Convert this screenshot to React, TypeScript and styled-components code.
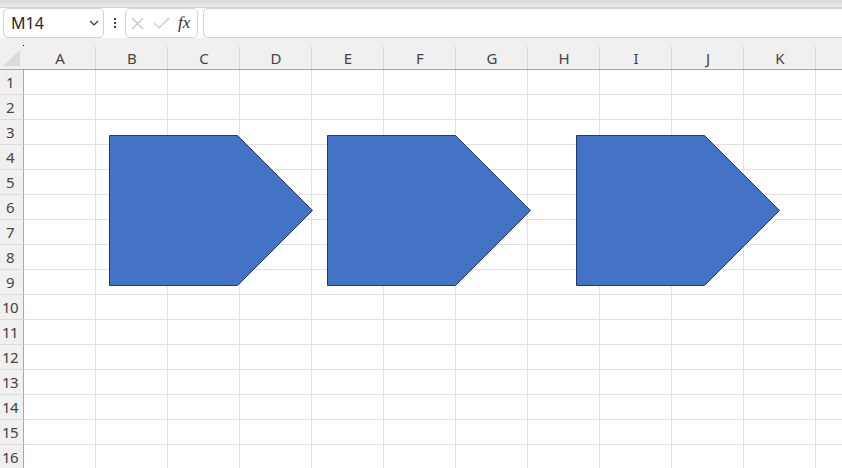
import styled, { createGlobalStyle } from "styled-components"

const GlobalStyle = createGlobalStyle`
	html, body {
		margin: 0;
		padding: 0;
		background: #fff;
		overflow: hidden;
	}
	body {
		font-family: "Noto Sans", "Liberation Sans", sans-serif;
	}
`

const Page = styled.div`
	position: relative;
	width: 842px;
	height: 468px;
	overflow: hidden;
	background: #fff;
`

const TopStrip = styled.div`
	height: 7px;
	background: linear-gradient(#d9d9d9, #ebebeb);
	border-bottom: 1px solid #d4d4d4;
`

const FormulaBar = styled.div`
	display: flex;
	align-items: stretch;
	height: 30px;
	padding-left: 3px;
	box-sizing: border-box;
`

const NameBox = styled.div`
	width: 101px;
	box-sizing: border-box;
	display: flex;
	align-items: center;
	justify-content: space-between;
	padding: 0 4px 0 7px;
	border: 1px solid #d2d2d2;
	border-radius: 5px;
	font-size: 16px;
	color: #262626;
`

const Dots = styled.div`
	width: 21px;
	display: flex;
	flex-direction: column;
	align-items: center;
	justify-content: center;
	gap: 2px;

	span {
		width: 2px;
		height: 2px;
		background: #3a3a3a;
	}
`

const FxBox = styled.div`
	width: 73px;
	box-sizing: border-box;
	display: flex;
	align-items: center;
	padding-left: 5px;
	gap: 9px;
	border: 1px solid #d2d2d2;
	border-radius: 5px;
`

const Fx = styled.span`
	font-family: "Liberation Serif", "DejaVu Serif", serif;
	font-style: italic;
	font-size: 17px;
	color: #333;
	margin-left: -1px;
`

const FormulaInput = styled.div`
	flex: 1;
	margin-left: 5px;
	border: 1px solid #d2d2d2;
	border-right: none;
	border-radius: 5px 0 0 5px;
`

const Sheet = styled.div`
	display: grid;
	grid-template-columns: 24px repeat(12, 72px);
	grid-template-rows: 32px;
	grid-auto-rows: 25px;
	font-size: 15px;
	color: #444;
`

const Corner = styled.div`
	position: relative;
	background: #f0f0f0;
	border-bottom: 1px solid #a8a8a8;

	&::before {
		content: "";
		position: absolute;
		left: 3px;
		bottom: 3px;
		width: 0;
		height: 0;
		border-left: 17px solid transparent;
		border-bottom: 16px solid #dadada;
	}

	&::after {
		content: "";
		position: absolute;
		right: 0;
		top: 7px;
		width: 1px;
		height: 1px;
		background: #111;
	}
`

const ColHeader = styled.div`
	position: relative;
	background: #f0f0f0;
	border-bottom: 1px solid #a8a8a8;
	display: flex;
	align-items: center;
	justify-content: center;
	padding-top: 9px;
	box-sizing: border-box;

	&::after {
		content: "";
		position: absolute;
		right: 0;
		top: 9px;
		bottom: 0;
		width: 1px;
		background: #d6d6d6;
	}
`

const RowHeader = styled.div`
	background: #f0f0f0;
	border-right: 1px solid #a8a8a8;
	border-bottom: 1px solid #dadada;
	box-sizing: border-box;
	display: flex;
	align-items: center;
	justify-content: center;
	padding-right: 3px;
	letter-spacing: -0.5px;
`

const Cell = styled.div`
	border-right: 1px solid #e0e0e0;
	border-bottom: 1px solid #e0e0e0;
	box-sizing: border-box;
`

const Arrow = styled.svg<{ $left: number; $top: number }>`
	position: absolute;
	left: ${(p) => p.$left}px;
	top: ${(p) => p.$top}px;
	width: 207px;
	height: 154px;
	overflow: visible;
`

// the last column runs off the right edge, its letter is not in view
const COLUMNS = ["A", "B", "C", "D", "E", "F", "G", "H", "I", "J", "K", ""]
const ROWS = Array.from({ length: 16 }, (_, i) => i + 1)
const ARROWS = [108, 326, 575]

function Chevron() {
	return (
		<svg width="10" height="6" viewBox="0 0 10 6">
			<path d="M1 1 L5 5 L9 1" fill="none" stroke="#333" strokeWidth="1.2" />
		</svg>
	)
}

function Cross() {
	return (
		<svg width="13" height="13" viewBox="0 0 13 13">
			<path d="M1 1 L12 12 M12 1 L1 12" stroke="#c4c4c4" strokeWidth="1.1" />
		</svg>
	)
}

function Check() {
	return (
		<svg width="17" height="12" viewBox="0 0 17 12">
			<path d="M1 6 L6 11 L16 1" fill="none" stroke="#c4c4c4" strokeWidth="1.1" />
		</svg>
	)
}

export default function App() {
	return (
		<Page>
			<GlobalStyle />
			<TopStrip />
			<FormulaBar>
				<NameBox>
					<span>M14</span>
					<Chevron />
				</NameBox>
				<Dots>
					<span />
					<span />
					<span />
				</Dots>
				<FxBox>
					<Cross />
					<Check />
					<Fx>fx</Fx>
				</FxBox>
				<FormulaInput />
			</FormulaBar>
			<Sheet>
				<Corner />
				{COLUMNS.map((c, i) => (
					<ColHeader key={i}>{c}</ColHeader>
				))}
				{ROWS.map((r) => [
					<RowHeader key={"h" + r}>{r}</RowHeader>,
					...COLUMNS.map((_, i) => <Cell key={i + "-" + r} />),
				])}
			</Sheet>
			{ARROWS.map((x) => (
				<Arrow key={x} $left={x} $top={134} viewBox="0 0 207 154">
					<polygon
						points="1.5,1.5 129.5,1.5 204.5,76.5 129.5,151.5 1.5,151.5"
						fill="#4472c4"
						stroke="#203a6e"
						strokeWidth="1"
					/>
				</Arrow>
			))}
		</Page>
	)
}
